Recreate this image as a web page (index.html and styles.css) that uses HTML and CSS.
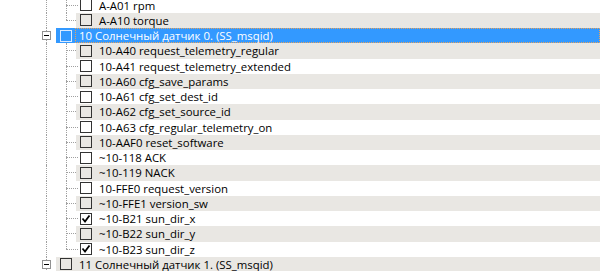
FILE: index.html
```html
<!DOCTYPE html>
<html lang="en">
  <head>
    <meta charset="UTF-8" />
    <title>Message tree</title>
    <link rel="stylesheet" href="styles.css">
  </head>
  <body>
    <div class="tree">

      <div class="row">
        <span class="guide line"></span>
        <span class="guide branch"></span>
        <span class="item"><span class="box"></span><span class="label">A-A01 rpm</span></span>
      </div>
      <div class="row alt">
        <span class="guide line"></span>
        <span class="guide branch last"></span>
        <span class="item"><span class="box"></span><span class="label">A-A10 torque</span></span>
      </div>

      <div class="row selected">
        <span class="guide line"><span class="expander"></span></span>
        <span class="item"><span class="box"></span><span class="label">10 Солнечный датчик 0. (SS_msqid)</span></span>
      </div>

      <div class="row alt">
        <span class="guide line"></span>
        <span class="guide branch"></span>
        <span class="item"><span class="box"></span><span class="label">10-A40 request_telemetry_regular</span></span>
      </div>
      <div class="row">
        <span class="guide line"></span>
        <span class="guide branch"></span>
        <span class="item"><span class="box"></span><span class="label">10-A41 request_telemetry_extended</span></span>
      </div>
      <div class="row alt">
        <span class="guide line"></span>
        <span class="guide branch"></span>
        <span class="item"><span class="box"></span><span class="label">10-A60 cfg_save_params</span></span>
      </div>
      <div class="row">
        <span class="guide line"></span>
        <span class="guide branch"></span>
        <span class="item"><span class="box"></span><span class="label">10-A61 cfg_set_dest_id</span></span>
      </div>
      <div class="row alt">
        <span class="guide line"></span>
        <span class="guide branch"></span>
        <span class="item"><span class="box"></span><span class="label">10-A62 cfg_set_source_id</span></span>
      </div>
      <div class="row">
        <span class="guide line"></span>
        <span class="guide branch"></span>
        <span class="item"><span class="box"></span><span class="label">10-A63 cfg_regular_telemetry_on</span></span>
      </div>
      <div class="row alt">
        <span class="guide line"></span>
        <span class="guide branch"></span>
        <span class="item"><span class="box"></span><span class="label">10-AAF0 reset_software</span></span>
      </div>
      <div class="row">
        <span class="guide line"></span>
        <span class="guide branch"></span>
        <span class="item"><span class="box"></span><span class="label">~10-118 ACK</span></span>
      </div>
      <div class="row alt">
        <span class="guide line"></span>
        <span class="guide branch"></span>
        <span class="item"><span class="box"></span><span class="label">~10-119 NACK</span></span>
      </div>
      <div class="row">
        <span class="guide line"></span>
        <span class="guide branch"></span>
        <span class="item"><span class="box"></span><span class="label">10-FFE0 request_version</span></span>
      </div>
      <div class="row alt">
        <span class="guide line"></span>
        <span class="guide branch"></span>
        <span class="item"><span class="box"></span><span class="label">~10-FFE1 version_sw</span></span>
      </div>
      <div class="row">
        <span class="guide line"></span>
        <span class="guide branch"></span>
        <span class="item">
          <span class="box"><svg viewBox="0 0 10 10"><polyline points="1.5,4.5 4,7.5 8.5,1.5" /></svg></span>
          <span class="label">~10-B21 sun_dir_x</span>
        </span>
      </div>
      <div class="row alt">
        <span class="guide line"></span>
        <span class="guide branch"></span>
        <span class="item"><span class="box"></span><span class="label">~10-B22 sun_dir_y</span></span>
      </div>
      <div class="row">
        <span class="guide line"></span>
        <span class="guide branch last"></span>
        <span class="item">
          <span class="box"><svg viewBox="0 0 10 10"><polyline points="1.5,4.5 4,7.5 8.5,1.5" /></svg></span>
          <span class="label">~10-B23 sun_dir_z</span>
        </span>
      </div>

      <div class="row alt">
        <span class="guide line"><span class="expander"></span></span>
        <span class="item"><span class="box"></span><span class="label">11 Солнечный датчик 1. (SS_msqid)</span></span>
      </div>

    </div>
  </body>
</html>
```

FILE: styles.css
```css
body {
  margin: 0;
  background: #fff;
  font-family: "Open Sans", sans-serif;
  font-size: 11.4px;
  color: #000;
  overflow: hidden;
}

.tree {
  margin-top: -2.5px;
  padding-left: 36px;
}

.row {
  display: flex;
  height: 15.25px;
}

.guide {
  width: 20px;
  flex-shrink: 0;
  position: relative;
}

.guide::before {
  content: "";
  position: absolute;
  left: 10px;
  top: 0;
  bottom: 0;
  border-left: 1px dotted #a0a0a0;
}

.branch::after {
  content: "";
  position: absolute;
  left: 10px;
  width: 12px;
  top: 7px;
  border-top: 1px dotted #a0a0a0;
}

.branch.last::before {
  bottom: 8px;
}

.expander {
  position: absolute;
  left: 6px;
  top: 3px;
  width: 7px;
  height: 7px;
  border: 1px solid #919191;
  background: #fff;
  z-index: 1;
}

.expander::after {
  content: "";
  position: absolute;
  left: 1px;
  top: 3px;
  width: 5px;
  border-top: 1px solid #000;
}

.item {
  flex: 1;
  display: flex;
  align-items: center;
  position: relative;
  z-index: 1;
}

.row.alt .item {
  background: #e9e7e3;
}

.box {
  width: 10px;
  height: 10px;
  margin-left: 4px;
  border: 1px solid #333;
  flex-shrink: 0;
  display: flex;
}

.box svg {
  width: 10px;
  height: 10px;
  fill: none;
  stroke: #000;
  stroke-width: 1.8;
}

.label {
  flex: 1;
  align-self: stretch;
  display: flex;
  align-items: center;
  margin-left: 3px;
  padding-left: 3px;
  padding-top: 1px;
  border: 1px solid transparent;
  border-top-width: 0;
  white-space: nowrap;
}

.row.selected .item {
  background: #3399ff;
  color: #fff;
}

.row.selected .box {
  border-color: #dcebff;
}

.row.selected .label {
  border-color: #e8a25a;
  border-style: dotted;
  border-top-width: 1px;
  padding-top: 0;
}
```
